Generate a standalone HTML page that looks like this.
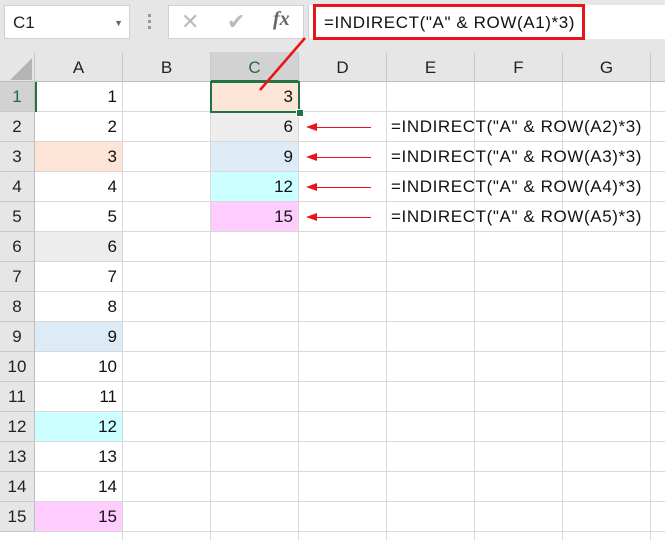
<!DOCTYPE html><html><head><style>
body{margin:0;width:665px;height:540px;overflow:hidden;background:#fff;font-family:"Liberation Sans","Noto Sans CJK JP",sans-serif;position:relative}
.a{position:absolute}
.top{left:0;top:0;width:665px;height:52px;background:#e6e6e6}
.hdr{top:52px;height:30px;background:#e6e6e6;border-right:1px solid #c8c8c8;border-bottom:1px solid #bdbdbd;box-sizing:border-box;text-align:center;line-height:31px;font-size:17px;color:#222}
.rh{left:0;width:35px;height:30px;background:#e6e6e6;border-bottom:1px solid #c8c8c8;border-right:1px solid #bdbdbd;box-sizing:border-box;text-align:center;line-height:30px;font-size:17px;color:#222}
.gv{top:82px;width:1px;height:458px;background:#d9d9d9}
.gh{left:35px;width:630px;height:1px;background:#d9d9d9}
.c{height:29px;line-height:30px;font-size:17px;text-align:right;padding-right:5px;box-sizing:border-box;color:#111}
.f{font-size:17px;color:#111;left:391px;line-height:30px;letter-spacing:0.6px;white-space:nowrap}
</style></head><body>
<div class="a top"></div>
<div class="a" style="left:4px;top:5px;width:126px;height:34px;background:#fff;border:1px solid #d0d0d0;box-sizing:border-box;font-size:17px;line-height:34px;padding-left:8px;color:#222">C1<span style="position:absolute;right:6px;top:0;font-size:9px;color:#666">▼</span></div>
<div class="a" style="left:148px;top:14px;width:3px;height:3px;background:#999;box-shadow:0 6px #999,0 12px #999"></div>
<div class="a" style="left:168px;top:5px;width:136px;height:34px;background:#fff;border:1px solid #d0d0d0;box-sizing:border-box"></div>
<div class="a" style="left:181px;top:9px;font-size:22px;color:#bbb">✕</div>
<div class="a" style="left:227px;top:9px;font-size:22px;color:#bbb">✔</div>
<div class="a" style="left:273px;top:8px;font-size:20px;color:#666;font-style:italic;font-family:'Liberation Serif',serif;font-weight:bold">fx</div>
<div class="a" style="left:308px;top:5px;width:357px;height:34px;background:#fff;border-left:1px solid #d0d0d0"></div>
<div class="a" style="left:313px;top:4px;width:272px;height:36px;border:3px solid #e8141c;box-sizing:border-box;font-size:17px;line-height:31px;padding-left:8px;color:#111;letter-spacing:0.6px;white-space:nowrap">=INDIRECT("A" &amp; ROW(A1)*3)</div>
<div class="a hdr" style="left:0;width:35px;background:#e6e6e6"></div>
<div class="a" style="left:10px;top:58px;width:0;height:0;border-left:22px solid transparent;border-bottom:22px solid #b5b5b5"></div>
<div class="a hdr" style="left:35px;width:88px">A</div>
<div class="a hdr" style="left:123px;width:88px">B</div>
<div class="a hdr" style="left:211px;width:88px;background:#d2d2d2;color:#1f6b45;border-bottom:2px solid #217346">C</div>
<div class="a hdr" style="left:299px;width:88px">D</div>
<div class="a hdr" style="left:387px;width:88px">E</div>
<div class="a hdr" style="left:475px;width:88px">F</div>
<div class="a hdr" style="left:563px;width:88px">G</div>
<div class="a hdr" style="left:651px;width:20px"></div>
<div class="a gv" style="left:122px"></div><div class="a gv" style="left:210px"></div><div class="a gv" style="left:298px"></div><div class="a gv" style="left:386px"></div><div class="a gv" style="left:474px"></div><div class="a gv" style="left:562px"></div><div class="a gv" style="left:650px"></div>
<div id="rows"></div>
<script>
var h='',bg={3:'#fce4d6',6:'#ededed',9:'#ddebf7',12:'#ccffff',15:'#ffccff'};
for(var i=1;i<=15;i++){var y=82+(i-1)*30;
h+='<div class="a rh" style="top:'+y+'px;'+(i==1?'background:#d2d2d2;color:#1f6b45':'')+'">'+i+'</div>';
h+='<div class="a gh" style="top:'+(y+29)+'px"></div>';
h+='<div class="a c" style="left:35px;top:'+y+'px;width:87px;'+(bg[i]?'background:'+bg[i]:'')+'">'+i+'</div>';
if(i<=5){var cb=['#fce4d6','#ededed','#ddebf7','#ccffff','#ffccff'][i-1];
h+='<div class="a c" style="left:211px;top:'+y+'px;width:87px;background:'+cb+'">'+(i*3)+'</div>';
if(i>1){h+='<div class="a f" style="top:'+y+'px">=INDIRECT("A" &amp; ROW(A'+i+')*3)</div>';
h+='<div class="a" style="left:315px;top:'+(y+15)+'px;width:56px;height:1px;background:#e8141c"></div><div class="a" style="left:306px;top:'+(y+11)+'px;border-right:11px solid #e8141c;border-top:4.5px solid transparent;border-bottom:4.5px solid transparent"></div>';}}}
document.getElementById('rows').innerHTML=h;
</script>
<div class="a" style="left:35px;top:82px;width:2px;height:30px;background:#217346"></div>
<div class="a" style="left:210px;top:81px;width:90px;height:32px;border:2px solid #217346;box-sizing:border-box"></div>
<div class="a" style="left:296px;top:109px;width:6px;height:6px;background:#217346;border:1px solid #fff"></div>
<svg class="a" style="left:0;top:0" width="665" height="540"><line x1="305" y1="38" x2="260" y2="90" stroke="#e8141c" stroke-width="2.5"/></svg>
</body></html>
